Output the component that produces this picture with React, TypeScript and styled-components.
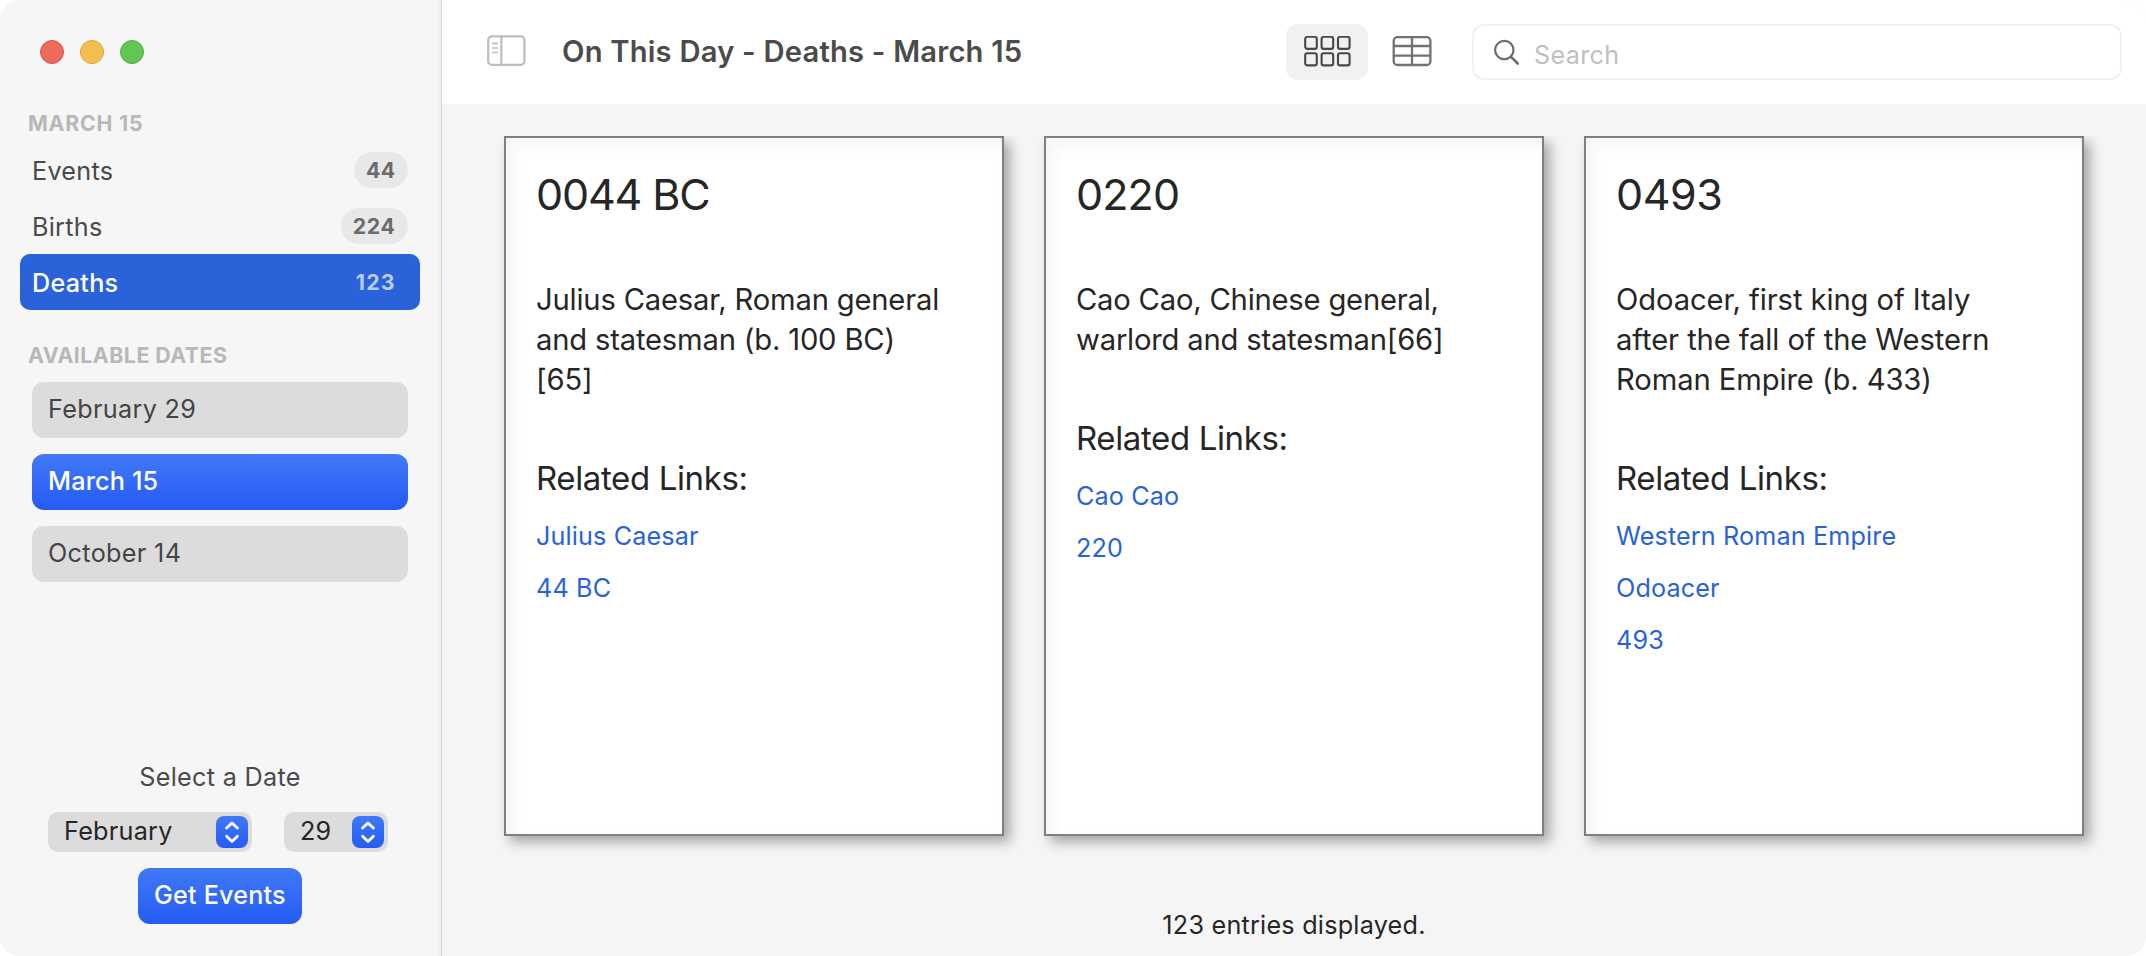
import React, { useState } from 'react';
import styled, { createGlobalStyle, css } from 'styled-components';

const GlobalStyle = createGlobalStyle`
  *, *::before, *::after { box-sizing: border-box; }
  body {
    margin: 0;
    background: #fff;
    font-family: Inter, 'Noto Sans', sans-serif;
    font-size: 25.2px;
    line-height: 30px;
    font-weight: 420;
    letter-spacing: 0.26px;
    color: #262626;
  }
  button { font: inherit; letter-spacing: inherit; border: 0; cursor: default; }
`;

const blueGradient = css`
  background: linear-gradient(180deg, #4179f7 0%, #255bf5 100%);
`;

const Window = styled.div`
  display: flex;
  width: 2146px;
  height: 956px;
  overflow: hidden;
  border-radius: 20px;
  background: #f5f5f5;
`;

/* ---------- sidebar ---------- */

const Sidebar = styled.aside`
  display: flex;
  flex-direction: column;
  flex: none;
  width: 442px;
  padding: 40px 20px 32px;
  background: #f6f6f6;
  border-right: 1px solid #d9d9d9;
  box-shadow: inset -5px 0 5px -4px rgba(0, 0, 0, 0.06);
`;

const TrafficLights = styled.div`
  display: flex;
  gap: 16px;
  padding-left: 20px;
`;

const Light = styled.span<{ $fill: string; $edge: string }>`
  width: 24px;
  height: 24px;
  border-radius: 50%;
  background: ${(p) => p.$fill};
  border: 1px solid ${(p) => p.$edge};
`;

const SectionTitle = styled.h2<{ $top: number; $track: number }>`
  margin: ${(p) => p.$top}px 0 0 8px;
  font-size: 21.3px;
  line-height: 26px;
  font-weight: 700;
  letter-spacing: ${(p) => p.$track}px;
  color: #b8b8b8;
`;

const TypeList = styled.nav`
  display: flex;
  flex-direction: column;
  margin-top: 6px;
`;

const TypeRow = styled.div<{ $active?: boolean }>`
  display: flex;
  justify-content: space-between;
  align-items: flex-start;
  width: 400px;
  height: 56px;
  padding: 10px 12px 0;
  border-radius: 10px;
  color: ${(p) => (p.$active ? '#fff' : '#4a4a4a')};
  background: ${(p) => (p.$active ? '#2962d9' : 'transparent')};
  font-weight: ${(p) => (p.$active ? 500 : 420)};
`;

const TypeLabel = styled.span`
  padding-top: 4px;
`;

const Badge = styled.span<{ $active?: boolean; $track: number }>`
  height: 36px;
  padding: 5px 12.5px 0 12px;
  border-radius: 18px;
  font-size: 21.3px;
  line-height: 26px;
  font-weight: 650;
  letter-spacing: ${(p) => p.$track}px;
  color: ${(p) => (p.$active ? '#bacdf4' : '#6b6b6b')};
  background: ${(p) => (p.$active ? 'transparent' : '#e8e8e8')};
`;

const DateList = styled.div`
  display: flex;
  flex-direction: column;
  gap: 16px;
  margin-top: 14px;
  padding-left: 12px;
`;

const DateButton = styled.button<{ $active?: boolean }>`
  width: 376px;
  height: 56px;
  padding: 0 16px 2px;
  border-radius: 12px;
  text-align: left;
  background: #dcdcdc;
  color: #444;
  letter-spacing: 0.33px;
  ${(p) =>
    p.$active &&
    css`
      ${blueGradient}
      color: #fff;
      font-weight: 500;
      letter-spacing: 0.17px;
    `}
`;

const Picker = styled.section`
  display: flex;
  flex-direction: column;
  align-items: center;
  width: 400px;
  margin-top: auto;
`;

const PickerLabel = styled.div`
  color: #4a4a4a;
  letter-spacing: 0.3px;
`;

const PickerRow = styled.div`
  display: flex;
  gap: 32px;
  width: 100%;
  margin: 20px 0 16px;
  padding-left: 28px;
`;

const Popup = styled.div<{ $width: number }>`
  display: flex;
  align-items: flex-start;
  justify-content: space-between;
  width: ${(p) => p.$width}px;
  height: 40px;
  padding: 4px 4px 4px 16px;
  border-radius: 10px;
  background: #dcdcdc;
`;

const Stepper = styled.span`
  display: flex;
  width: 32px;
  height: 32px;
  border-radius: 8px;
  ${blueGradient}
`;

const GetButton = styled.button`
  width: 164px;
  height: 56px;
  padding: 0 0 2px;
  border-radius: 12px;
  color: #fff;
  font-weight: 500;
  letter-spacing: 0.18px;
  white-space: nowrap;
  ${blueGradient}
`;

/* ---------- main area ---------- */

const Main = styled.main`
  display: flex;
  flex-direction: column;
  flex: 1;
  min-width: 0;
`;

const Toolbar = styled.header`
  display: flex;
  align-items: flex-start;
  height: 104px;
  padding: 24px 24px 0 44px;
  background: #fff;
`;

const SidebarToggle = styled.span`
  display: flex;
  width: 40px;
  padding-top: 10px;
`;

const Title = styled.h1`
  margin: 10px auto 0 36px;
  font-size: 29.2px;
  line-height: 35px;
  font-weight: 640;
  letter-spacing: 0.2px;
  color: #4b4b4b;
`;

const ModeButton = styled.button<{ $active?: boolean }>`
  display: flex;
  align-items: center;
  justify-content: center;
  width: 82px;
  height: 56px;
  margin-right: 3px;
  padding: 0;
  border-radius: 12px;
  color: ${(p) => (p.$active ? '#484848' : '#727272')};
  background: ${(p) => (p.$active ? '#f1f1f1' : 'transparent')};
`;

const SearchField = styled.label`
  display: flex;
  width: 650px;
  height: 56px;
  margin-left: 16px;
  padding: 14px 16px 0 18px;
  border: 2px solid #f1f1f1;
  border-radius: 12px;
  color: #bfbfbf;
  letter-spacing: 0.3px;
`;

const SearchIcon = styled.svg`
  flex: none;
  margin: -2px 14px 0 0;
`;

const CardGrid = styled.div`
  display: flex;
  gap: 40px;
  height: 730px;
  margin-top: 32px;
  padding-left: 62px;
  overflow: hidden;
`;

const Card = styled.article`
  flex: none;
  width: 500px;
  height: 700px;
  padding: 30px 20px 0 30px;
  border: 2px solid #7f7f7f;
  background: #fff;
  box-shadow: 6px 6px 12px rgba(0, 0, 0, 0.33), inset 12px 12px 12px -2px rgba(0, 0, 0, 0.03),
    inset 0 0 10px rgba(0, 0, 0, 0.015);
`;

const Year = styled.h2<{ $track: number }>`
  margin: 0;
  font-size: 43px;
  line-height: 52px;
  font-weight: 420;
  letter-spacing: ${(p) => p.$track}px;
`;

const Summary = styled.p<{ $track: number }>`
  margin: 60px 0 58px;
  font-size: 29.2px;
  line-height: 40px;
  letter-spacing: ${(p) => p.$track}px;
  white-space: pre;
`;

const LinksTitle = styled.h3`
  margin: 0 0 23px;
  font-size: 33px;
  line-height: 40px;
  font-weight: 420;
  letter-spacing: -0.38px;
`;

const Links = styled.div`
  display: flex;
  flex-direction: column;
  gap: 22px;
  color: #2862d9;
  letter-spacing: 0.13px;
`;

const Status = styled.footer`
  margin-top: 44px;
  text-align: center;
  letter-spacing: 0.23px;
`;

/* ---------- icons ---------- */

const ChevronsUpDown = () => (
  <svg width="32" height="32" viewBox="0 0 32 32" fill="none" stroke="#fff" strokeWidth="2.8" strokeLinecap="round" strokeLinejoin="round">
    <path d="M10.6 12.1 16 6.9l5.4 5.2M10.6 20.2 16 25.4l5.4-5.2" />
  </svg>
);

const SidebarGlyph = () => (
  <svg width="40" height="32" viewBox="0 0 40 32" fill="none" stroke="#bdbdbd" strokeWidth="2.2">
    <rect x="2.2" y="2.4" width="36.2" height="28.4" rx="3.8" />
    <path d="M15.3 2.4v28.4" />
    <path d="M6.8 9.4h4.6M6.8 14h4.6M6.8 18.5h4.6" strokeWidth="1.7" strokeLinecap="round" />
  </svg>
);

const GridGlyph = () => (
  <svg width="48" height="32" viewBox="0 0 48 32" fill="none" stroke="currentColor" strokeWidth="2.1">
    {[0, 1, 2].map((col) =>
      [0, 1].map((row) => (
        <rect key={`${col}-${row}`} x={2.2 + col * 16.4} y={0.8 + row * 16.5} width="11.6" height="12.1" rx="2.2" />
      )),
    )}
  </svg>
);

const TableGlyph = () => (
  <svg width="40" height="32" viewBox="0 0 40 32" fill="none" stroke="currentColor" strokeWidth="2.3">
    <rect x="1.7" y="1.1" width="36.7" height="27.9" rx="3.8" />
    <path d="M20 1.1V29M1.7 10h36.7M1.7 19.7h36.7" />
  </svg>
);

/* ---------- data ---------- */

const types = [
  { name: 'Events', count: 44, track: 0.3 },
  { name: 'Births', count: 224, track: 0.6 },
  { name: 'Deaths', count: 123, track: 1.1 },
];

const dates = ['February 29', 'March 15', 'October 14'];

const entries = [
  {
    year: '0044 BC',
    yearTrack: -1.15,
    track: -0.18,
    text: 'Julius Caesar, Roman general\nand statesman (b. 100 BC)\n[65]',
    links: ['Julius Caesar', '44 BC'],
  },
  {
    year: '0220',
    yearTrack: -0.9,
    track: -0.2,
    text: 'Cao Cao, Chinese general,\nwarlord and statesman[66]',
    links: ['Cao Cao', '220'],
  },
  {
    year: '0493',
    yearTrack: -0.4,
    track: -0.09,
    text: 'Odoacer, first king of Italy\nafter the fall of the Western\nRoman Empire (b. 433)',
    links: ['Western Roman Empire', 'Odoacer', '493'],
  },
];

export default function App() {
  const [type, setType] = useState('Deaths');
  const [date, setDate] = useState('March 15');
  const [mode, setMode] = useState('grid');

  return (
    <>
      <GlobalStyle />
      <Window>
        <Sidebar>
          <TrafficLights>
            <Light $fill="#ed6a5f" $edge="#d9554a" />
            <Light $fill="#f5bf4f" $edge="#dba340" />
            <Light $fill="#62c554" $edge="#50a945" />
          </TrafficLights>

          <SectionTitle $top={46} $track={0.77}>MARCH 15</SectionTitle>
          <TypeList>
            {types.map((t) => (
              <TypeRow key={t.name} $active={t.name === type} onClick={() => setType(t.name)}>
                <TypeLabel>{t.name}</TypeLabel>
                <Badge $active={t.name === type} $track={t.track}>{t.count}</Badge>
              </TypeRow>
            ))}
          </TypeList>

          <SectionTitle $top={32} $track={0.5}>AVAILABLE DATES</SectionTitle>
          <DateList>
            {dates.map((d) => (
              <DateButton key={d} $active={d === date} onClick={() => setDate(d)}>
                {d}
              </DateButton>
            ))}
          </DateList>

          <Picker>
            <PickerLabel>Select a Date</PickerLabel>
            <PickerRow>
              <Popup $width={204}>
                February
                <Stepper><ChevronsUpDown /></Stepper>
              </Popup>
              <Popup $width={104}>
                29
                <Stepper><ChevronsUpDown /></Stepper>
              </Popup>
            </PickerRow>
            <GetButton>Get Events</GetButton>
          </Picker>
        </Sidebar>

        <Main>
          <Toolbar>
            <SidebarToggle><SidebarGlyph /></SidebarToggle>
            <Title>On This Day - Deaths - March 15</Title>
            <ModeButton $active={mode === 'grid'} onClick={() => setMode('grid')}><GridGlyph /></ModeButton>
            <ModeButton $active={mode === 'table'} onClick={() => setMode('table')}><TableGlyph /></ModeButton>
            <SearchField>
              <SearchIcon width="28" height="28" viewBox="0 0 28 28" fill="none" stroke="#6c6c6c" strokeWidth="2.2" strokeLinecap="round">
                <circle cx="12.3" cy="12" r="9.2" />
                <path d="m19 18.8 6.7 6.7" strokeWidth="2.6" />
              </SearchIcon>
              Search
            </SearchField>
          </Toolbar>

          <CardGrid>
            {entries.map((e) => (
              <Card key={e.year}>
                <Year $track={e.yearTrack}>{e.year}</Year>
                <Summary $track={e.track}>{e.text}</Summary>
                <LinksTitle>Related Links:</LinksTitle>
                <Links>
                  {e.links.map((l) => (
                    <span key={l}>{l}</span>
                  ))}
                </Links>
              </Card>
            ))}
          </CardGrid>
          <Status>123 entries displayed.</Status>
        </Main>
      </Window>
    </>
  );
}
